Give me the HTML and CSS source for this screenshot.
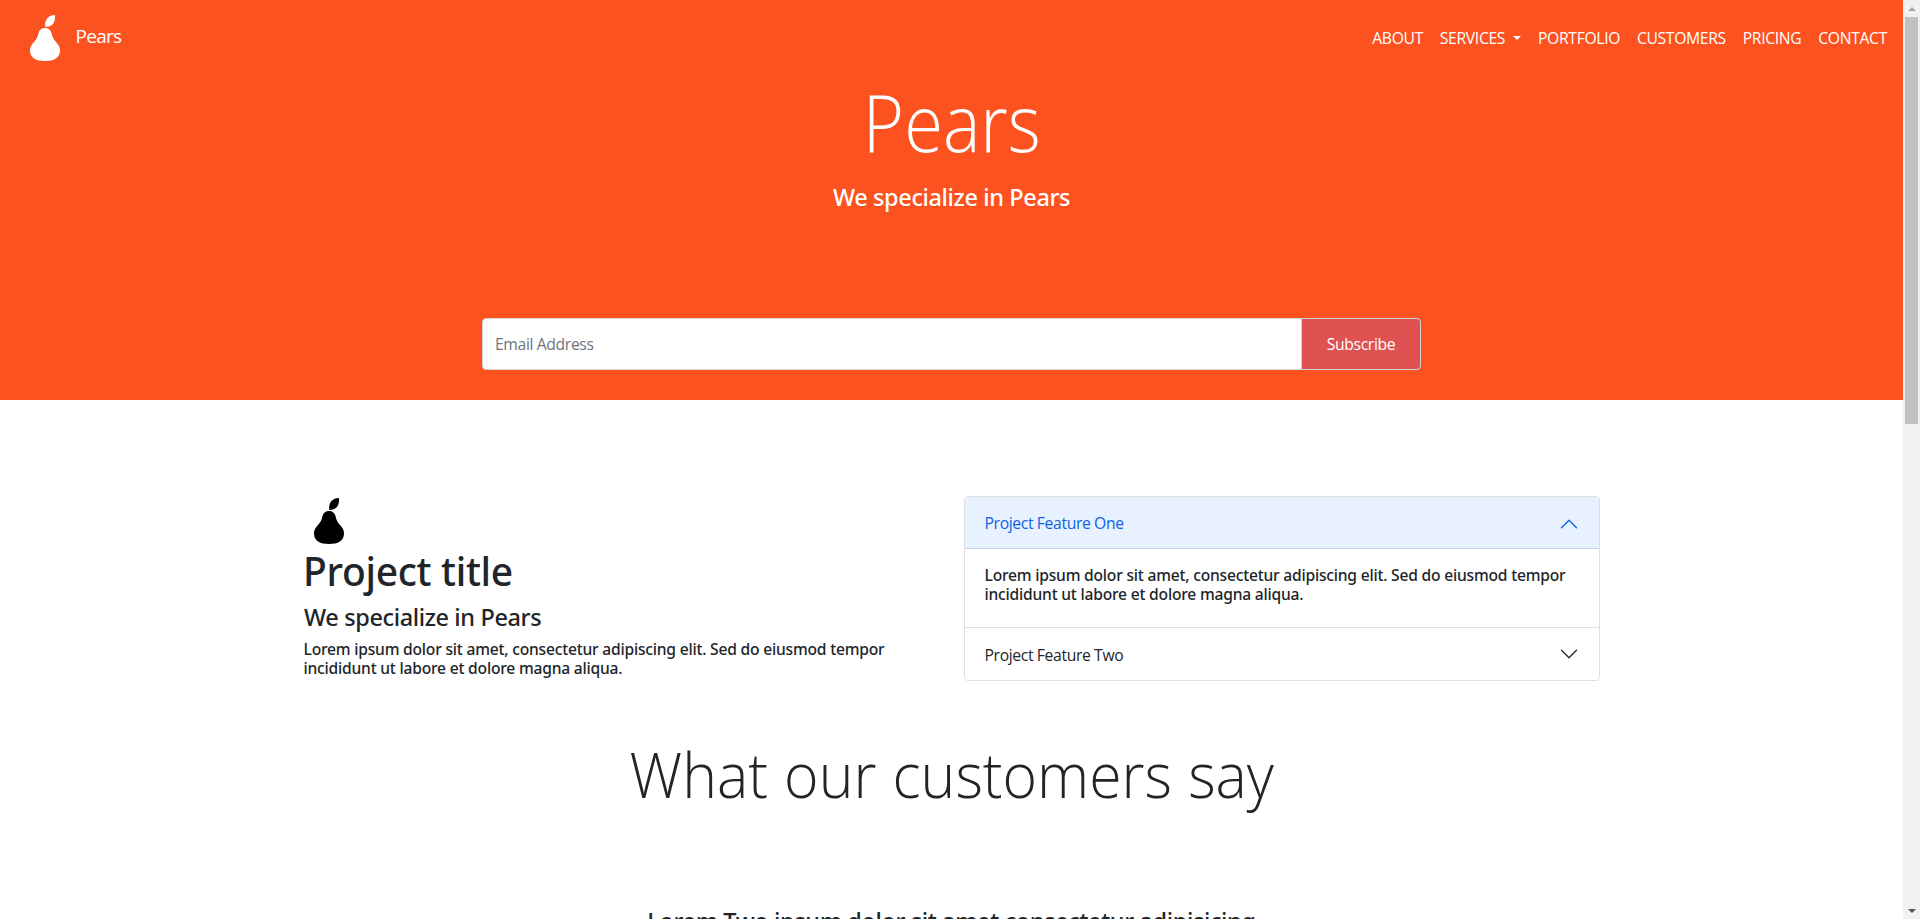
FILE: index.html
```html
<!DOCTYPE html>
<html lang="en">
<head>
<meta charset="utf-8">
<title>Pears</title>
<link rel="stylesheet" href="styles.css">
</head>
<body>
<svg class="defs" width="0" height="0" aria-hidden="true">
  <symbol id="pear" viewBox="0 0 30 46">
    <path d="M15 13C18.5 13 20.8 15 21.5 18C22.3 22 23.5 24.5 26 27C28.5 29.8 30 32 30 35.5C30 43 24 46 15 46C6 46 0 43 0 35.5C0 32 1.5 29.8 4 27C6.500 24.500 7.700 22 8.500 18C9.200 15 11.500 13 15 13Z"/>
    <path d="M25 0C25.500 7 23 12 15.200 12C14.500 5 17.500 .5 25 0Z"/>
  </symbol>
  <symbol id="chevron" viewBox="0 0 16 16">
    <path d="M1.646 4.646a.5.5 0 0 1 .708 0L8 10.293l5.646-5.647a.5.5 0 0 1 .708.708l-6 6a.5.5 0 0 1-.708 0l-6-6a.5.5 0 0 1 0-.708z"/>
  </symbol>
</svg>
<div class="window">
  <div class="page">
    <header class="hero">
      <nav class="navbar">
        <a class="brand"><svg class="pear"><use href="#pear"/></svg><span>Pears</span></a>
        <ul class="menu">
          <li>ABOUT</li>
          <li class="dropdown">SERVICES</li>
          <li>PORTFOLIO</li>
          <li>CUSTOMERS</li>
          <li>PRICING</li>
          <li>CONTACT</li>
        </ul>
      </nav>
      <h1 class="display">Pears</h1>
      <h4 class="lead">We specialize in Pears</h4>
      <form class="subscribe">
        <input class="email" type="text" placeholder="Email Address">
        <button class="submit" type="button">Subscribe</button>
      </form>
    </header>
    <main>
      <section class="features">
        <div class="project">
          <svg class="pear"><use href="#pear"/></svg>
          <h1 class="title">Project title</h1>
          <h4 class="subtitle">We specialize in Pears</h4>
          <p class="copy">Lorem ipsum dolor sit amet, consectetur adipiscing elit. Sed do eiusmod tempor<br>incididunt ut labore et dolore magna aliqua.</p>
        </div>
        <div class="accordion">
          <div class="toggle open"><span>Project Feature One</span><svg class="chev"><use href="#chevron"/></svg></div>
          <div class="panel"><p class="copy">Lorem ipsum dolor sit amet, consectetur adipiscing elit. Sed do eiusmod tempor<br>incididunt ut labore et dolore magna aliqua.</p></div>
          <div class="toggle"><span>Project Feature Two</span><svg class="chev"><use href="#chevron"/></svg></div>
        </div>
      </section>
      <section class="customers">
        <h2 class="heading">What our customers say</h2>
        <h4 class="quote">Lorem Two ipsum dolor sit amet consectetur adipisicing</h4>
      </section>
    </main>
  </div>
  <div class="scrollbar">
    <i class="arrow up"></i>
    <i class="thumb"></i>
    <i class="arrow down"></i>
  </div>
</div>
</body>
</html>
```
FILE: styles.css
```css
* { box-sizing: border-box; }
body {
  margin: 0;
  font: 400 15.7px/24px "Open Sans", "Noto Sans", sans-serif;
  letter-spacing: -.36px;
  color: #212529;
  background: #fff;
}
h1, h2, h4, p, ul { margin: 0; padding: 0; }
.defs { display: block; }
.window { display: flex; height: 919px; overflow: hidden; }
.page { flex: 1; height: 919px; overflow: hidden; }
.pear { display: block; width: 30px; height: 46px; fill: currentColor; }

.hero {
  height: 400px;
  display: flex;
  flex-direction: column;
  align-items: center;
  background: #fc521f;
  color: #fff;
}
.navbar {
  width: 100%;
  height: 74px;
  flex: none;
  padding: 15px 16px 0 30px;
  display: flex;
  justify-content: space-between;
  align-items: flex-start;
}
.brand { display: flex; gap: 15.5px; }
.brand span { padding-top: 6px; font-size: 19px; line-height: 30px; letter-spacing: -.7px; }
.menu { display: flex; gap: 16.8px; padding-top: 11px; list-style: none; letter-spacing: -.32px; }
.dropdown::after {
  content: "";
  display: inline-block;
  margin-left: 8px;
  vertical-align: 4px;
  border: 4.8px solid transparent;
  border-top-color: #fff;
  border-bottom: 0;
}
.display { font-size: 78.4px; font-weight: 300; line-height: 96px; letter-spacing: 0; transform: scaleX(.9); }
.lead, .subtitle, .quote { font-family: "Noto Sans", sans-serif; font-size: 23.5px; font-weight: 500; line-height: 29px; letter-spacing: -.37px; }
.lead { margin-top: 13px; }
.subscribe { display: flex; width: 939px; height: 52px; margin-top: 106px; }
.email, .submit { font: inherit; letter-spacing: inherit; border: 1px solid #ced4da; margin: 0; }
.email { flex: 1; padding: 0 12px; border-radius: 4px 0 0 4px; background: #fff; }
.email::placeholder { color: #6c757d; opacity: 1; }
.submit {
  width: 120px;
  margin-left: -1px;
  border-radius: 0 4px 4px 0;
  background: #e05252;
  color: #fff;
}

.features { display: flex; gap: 24px; padding: 96px 303px 0 304px; height: 335px; }
.project { width: 636px; padding-top: 2px; color: #212529; }
.project .pear { margin-left: 10px; color: #000; }
.title { margin: 3px 0 0 -1px; font: 500 39px/48px "Noto Sans", sans-serif; letter-spacing: -.3px; }
.subtitle { margin-top: 8px; }
.copy { margin-left: -.5px; font: 500 15.6px/19.2px "Noto Sans", sans-serif; letter-spacing: -.2px; }
.project .copy { margin-top: 8px; }
.accordion { width: 636px; height: 185px; border: 1px solid #dfdfdf; border-radius: 4px; overflow: hidden; }
.toggle { display: flex; justify-content: space-between; height: 52px; padding: 14px 20px 0 19.5px; }
.toggle.open { background: #e7f1ff; color: #0c63e4; border-bottom: 1px solid #c5d3e6; }
.toggle:last-child { padding-top: 15px; }
.chev { width: 20px; height: 20px; margin-top: 3px; fill: currentColor; }
.open .chev { transform: rotate(180deg); }
.toggle:last-child .chev { margin-top: 1px; }
.panel { height: 79px; padding: 17px 20px 0; border-bottom: 1px solid #dfdfdf; }

.customers { display: flex; flex-direction: column; align-items: center; }
.heading { font-size: 62.7px; font-weight: 300; line-height: 77px; letter-spacing: 0; word-spacing: 1px; transform: scaleX(.94); }
.quote { margin-top: 95px; }

.scrollbar { width: 17px; height: 919px; padding: 7px 2px 6px; display: flex; flex-direction: column; align-items: center; background: #f1f1f1; }
.arrow { border: 4px solid transparent; }
.up { border-top: 0; border-bottom-color: #a3a3a3; }
.thumb { width: 13px; height: 407px; margin: 6px 0 auto; background: #c1c1c1; }
.down { border-bottom: 0; border-top-color: #505050; }
```
